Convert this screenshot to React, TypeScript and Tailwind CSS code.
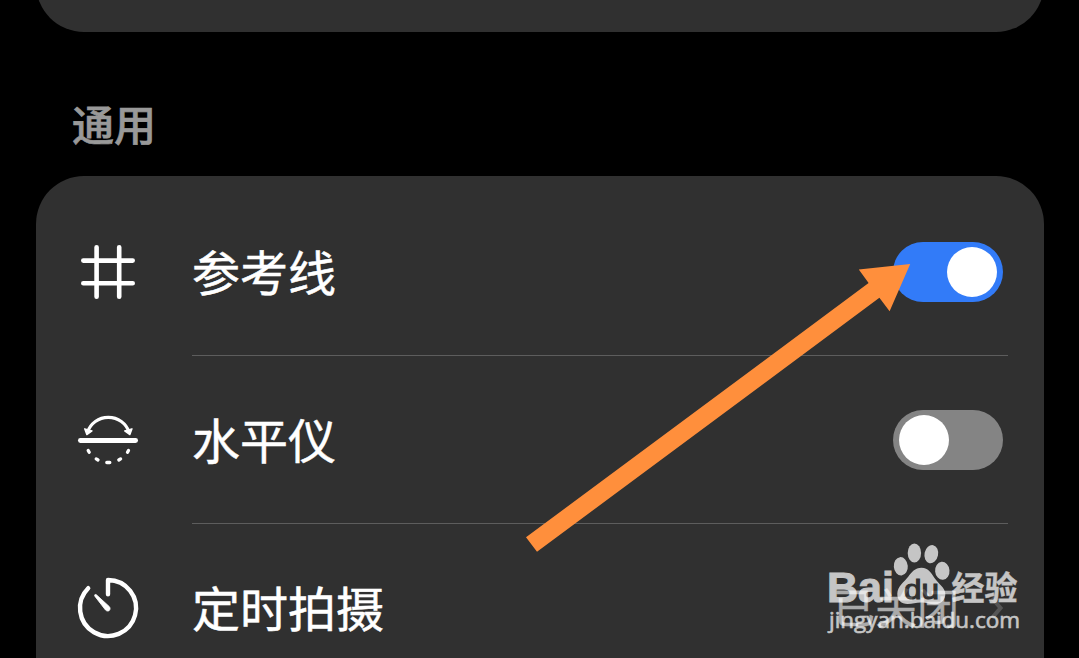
import type { ReactNode } from "react";

type ToggleProps = {
  on: boolean;
};

type SettingRowProps = {
  icon: ReactNode;
  label: string;
  children: ReactNode;
  last?: boolean;
};

function GridIcon() {
  return (
    <svg
      className="size-[72px]"
      viewBox="0 0 72 72"
      fill="none"
      stroke="white"
      strokeLinecap="round"
      strokeWidth="4.6"
    >
      <path d="M24.6 11.3v49.4M47.2 11.3v49.4M11.3 24.6h49.4M11.3 47.2h49.4" />
    </svg>
  );
}

function LevelIcon() {
  return (
    <svg className="size-[72px]" viewBox="0 0 72 72" fill="none" stroke="white">
      <path d="M8.4 36.5h55.2" strokeWidth="4.8" strokeLinecap="round" />
      <path d="M15.3 28.5C18.5 19.5 26.5 13.4 36.3 13.4S54.3 19.5 57.2 28.5" strokeWidth="3.1" />
      <path
        d="M12.7 24.8l7.3 2.1-5.2 3.7zM60 24.8l-7.3 2.1 5.2 3.7z"
        fill="white"
        strokeWidth="1.4"
        strokeLinejoin="round"
      />
      <path
        d="M16.2 46.4l1 1.9M24.2 54.9l1.8 1.1M34.8 58.5h3M46.8 56l1.8-1.1M55.5 48.3l1-1.9"
        strokeWidth="3.3"
        strokeLinecap="round"
      />
    </svg>
  );
}

function TimerIcon() {
  return (
    <svg className="size-[72px]" viewBox="0 0 72 72" fill="none" stroke="white">
      <path
        d="M36 22.2V8a28 28 0 1 1-19.8 8.2"
        strokeWidth="4.4"
        strokeLinecap="round"
        strokeLinejoin="round"
      />
      <path
        d="M24.4 22.8c-1.4-.9-2.4.2-1.4 1.6L33.5 38c2.8 2.8 6.2-.6 3.7-3.5z"
        fill="white"
        strokeWidth="0.8"
        strokeLinejoin="round"
      />
    </svg>
  );
}

function Toggle({ on }: ToggleProps) {
  return (
    <button
      type="button"
      role="switch"
      aria-checked={on}
      className={`flex h-[60px] w-[110px] items-center rounded-full ${
        on ? "justify-end bg-[#327bf8] pr-1.5" : "justify-start bg-[#848484] pl-1.5"
      }`}
    >
      <span className="size-[50px] rounded-full bg-white" />
    </button>
  );
}

function SettingRow({ icon, label, children, last = false }: SettingRowProps) {
  return (
    <div className="flex h-[168px] pr-9 pl-9">
      <div className="flex w-[120px] shrink-0 items-center">{icon}</div>
      <div
        className={`flex flex-1 items-center justify-between border-b pr-[5px] ${
          last ? "border-transparent" : "border-[#5d5d5d]"
        }`}
      >
        <span className="pb-1 text-5xl leading-none text-white [-webkit-text-stroke:0.5px_white]">
          {label}
        </span>
        {children}
      </div>
    </div>
  );
}

function Watermark() {
  return (
    <svg
      className="absolute top-[536px] left-[820px] h-[106px] w-[208px]"
      viewBox="820 536 208 106"
      fill="white"
      opacity="0.72"
    >
      <text
        x="827"
        y="602.3"
        fontFamily="Liberation Sans, sans-serif"
        fontWeight="bold"
        fontSize="43"
        textLength="67"
        lengthAdjust="spacingAndGlyphs"
        stroke="white"
        strokeWidth="1"
      >
        Bai
      </text>
      <ellipse cx="900.8" cy="566.3" rx="7" ry="9.2" transform="rotate(-5 900.8 566.3)" />
      <ellipse cx="914.4" cy="553" rx="6.7" ry="9.5" />
      <ellipse cx="931.3" cy="554.2" rx="6.8" ry="9.2" transform="rotate(12 931.3 554.2)" />
      <ellipse cx="942.3" cy="570.8" rx="7.2" ry="9" transform="rotate(-5 942.3 570.8)" />
      <path d="M921.5 567.8c-6.5 0-10 4.6-13.3 9-3.7 5-10.7 9.6-10.9 16.7-.2 6.8 4.2 10.6 10.4 10.5 5.2-.1 8.6-1.7 14.1-1.5 5 .1 8.5 2.2 13.5 1.8 6.4-.5 10.2-5 10-10.5-.2-6.3-6.9-10-10.8-15.8-3-4.6-6-10.2-13-10.2z" />
      <text
        x="904"
        y="598.5"
        fill="#303030"
        stroke="#303030"
        strokeWidth="1.1"
        fontFamily="Liberation Sans, sans-serif"
        fontSize="28"
        textLength="35"
        lengthAdjust="spacingAndGlyphs"
      >
        du
      </text>
      <text
        x="951.5"
        y="600"
        fontFamily="Noto Sans CJK SC, sans-serif"
        fontWeight="bold"
        fontSize="33"
        stroke="white"
        strokeWidth="0.4"
      >
        经验
      </text>
      <text
        x="829"
        y="627.7"
        fontFamily="Open Sans, sans-serif"
        fontWeight="500"
        fontSize="22.5"
        textLength="191"
        lengthAdjust="spacingAndGlyphs"
        stroke="white"
        strokeWidth="0.6"
      >
        jingyan.baidu.com
      </text>
    </svg>
  );
}

function PointerArrow() {
  return (
    <svg
      className="pointer-events-none absolute top-[255px] left-[516px] h-[305px] w-[404px]"
      viewBox="516 255 404 305"
    >
      <path
        d="M526 537.3L868.6 283l-9.8-13.6 51.4-5.4-20.6 47.2-10.2-13.4L537 551.8z"
        fill="#ff8f3c"
      />
    </svg>
  );
}

export default function App() {
  return (
    <main className="relative flex h-[658px] w-[1079px] flex-col overflow-hidden bg-black pr-[35px] pl-9 font-['Noto_Sans_CJK_SC',sans-serif]">
      <div className="h-8 shrink-0 overflow-hidden">
        <div className="-mt-24 h-32 rounded-[48px] bg-[#303030]" />
      </div>
      <h2 className="flex h-36 shrink-0 items-center pt-[37px] pl-9 text-[42px] leading-none font-medium text-[#999] [-webkit-text-stroke:0.7px_#999]">
        通用
      </h2>
      <section className="h-[530px] shrink-0 rounded-t-[48px] bg-[#303030] pt-3">
        <SettingRow icon={<GridIcon />} label="参考线">
          <Toggle on />
        </SettingRow>
        <SettingRow icon={<LevelIcon />} label="水平仪">
          <Toggle on={false} />
        </SettingRow>
        <SettingRow icon={<TimerIcon />} label="定时拍摄" last>
          <div className="flex items-center gap-8 text-[42px] leading-none text-[#aaa]">
            <span className="pb-1 [-webkit-text-stroke:0.4px_#aaa]">已关闭</span>
            <svg
              className="h-6 w-3"
              viewBox="0 0 12 24"
              fill="none"
              stroke="#555"
              strokeWidth="4"
            >
              <path d="M1 2l8.5 10L1 22" />
            </svg>
          </div>
        </SettingRow>
      </section>
      <PointerArrow />
      <Watermark />
    </main>
  );
}
